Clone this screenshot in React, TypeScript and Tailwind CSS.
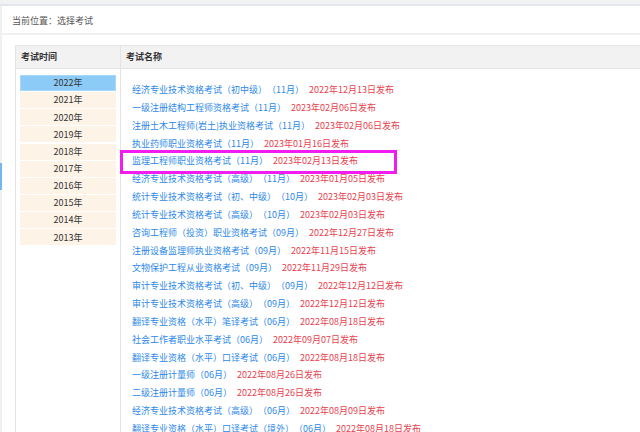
import React from 'react';

const years = ['2022', '2021', '2020', '2019', '2018', '2017', '2016', '2015', '2014', '2013'];

const exams: { name: string; date: string }[] = [
  { name: '经济专业技术资格考试（初中级）（11月）', date: '2022年12月13日发布' },
  { name: '一级注册结构工程师资格考试（11月）', date: '2023年02月06日发布' },
  { name: '注册土木工程师(岩土)执业资格考试（11月）', date: '2023年02月06日发布' },
  { name: '执业药师职业资格考试（11月）', date: '2023年01月16日发布' },
  { name: '监理工程师职业资格考试（11月）', date: '2023年02月13日发布' },
  { name: '经济专业技术资格考试（高级）（11月）', date: '2023年01月05日发布' },
  { name: '统计专业技术资格考试（初、中级）（10月）', date: '2023年02月03日发布' },
  { name: '统计专业技术资格考试（高级）（10月）', date: '2023年02月03日发布' },
  { name: '咨询工程师（投资）职业资格考试（09月）', date: '2022年12月27日发布' },
  { name: '注册设备监理师执业资格考试（09月）', date: '2022年11月15日发布' },
  { name: '文物保护工程从业资格考试（09月）', date: '2022年11月29日发布' },
  { name: '审计专业技术资格考试（初、中级）（09月）', date: '2022年12月12日发布' },
  { name: '审计专业技术资格考试（高级）（09月）', date: '2022年12月12日发布' },
  { name: '翻译专业资格（水平）笔译考试（06月）', date: '2022年08月18日发布' },
  { name: '社会工作者职业水平考试（06月）', date: '2022年09月07日发布' },
  { name: '翻译专业资格（水平）口译考试（06月）', date: '2022年08月18日发布' },
  { name: '一级注册计量师（06月）', date: '2022年08月26日发布' },
  { name: '二级注册计量师（06月）', date: '2022年08月26日发布' },
  { name: '经济专业技术资格考试（高级）（06月）', date: '2022年08月09日发布' },
  { name: '翻译专业资格（水平）口译考试（境外）（06月）', date: '2022年08月18日发布' },
];

export default function App() {
  return (
    <div className="w-[640px] h-[432px] overflow-hidden bg-white flex flex-col text-[9px] [text-spacing-trim:space-all] font-['Noto_Sans_CJK_SC','Noto_Sans',sans-serif]">
      {/* top strip */}
      <div className="h-[4px] shrink-0 bg-[#f2f2f2]" />
      <div className="h-[2px] shrink-0 bg-[#e3e7eb]" />

      <div className="flex flex-1 min-h-0">
        {/* left edge strip */}
        <div className="w-[2px] shrink-0 flex flex-col bg-[#f0f0f0]">
          <div className="h-[157px]" />
          <div className="h-[27px] bg-[#74b6ee]" />
        </div>

        <div className="flex-1 flex flex-col min-w-0">
          {/* breadcrumb */}
          <div className="h-[27px] shrink-0 flex items-center pl-[10px] pt-[2px] text-[#555]">当前位置：选择考试</div>
          <div className="h-[2px] shrink-0 bg-[#f0f0f0]" />

          {/* table */}
          <div className="mt-[10px] ml-[13px] flex-1 flex flex-col border-l border-t border-[#e4e4e4]">
            <div className="h-[23px] shrink-0 flex bg-[#f2f2f2] border-b border-[#e4e4e4] font-bold text-[#333]">
              <div className="w-[105px] shrink-0 flex items-center pl-[5px] border-r border-[#e4e4e4]">考试时间</div>
              <div className="flex-1 flex items-center pl-[5px]">考试名称</div>
            </div>

            <div className="flex flex-1">
              {/* years */}
              <div className="w-[105px] shrink-0 border-r border-[#e4e4e4] pt-[6px] pl-[4px] pr-[4px]">
                <div className="flex flex-col gap-[1.15px]">
                  {years.map((y, i) => (
                    <div
                      key={y}
                      className={
                        i === 0
                          ? 'h-[16px] flex items-center justify-center bg-[#8ccbf7] border border-[#a6d6f8] text-[#333]'
                          : 'h-[16px] flex items-center justify-center bg-[#fdf3e7] text-[#333]'
                      }
                    >
                      {y}年
                    </div>
                  ))}
                </div>
              </div>

              {/* exam list */}
              <div className="flex-1 relative pt-[12px] pl-[11px]">
                {exams.map((e) => (
                  <div key={e.name + e.date} className="h-[17.83px] flex items-center whitespace-nowrap">
                    <span className="text-[#2d88e8]">{e.name}</span>
                    <span className="ml-[5px] text-[#e8414e]">{e.date}</span>
                  </div>
                ))}
                {/* annotation box */}
                <div className="absolute left-[-1px] top-[81px] w-[277px] h-[24px] border-[3px] border-[#f01cf0]" />
              </div>
            </div>
          </div>
        </div>
      </div>
    </div>
  );
}
